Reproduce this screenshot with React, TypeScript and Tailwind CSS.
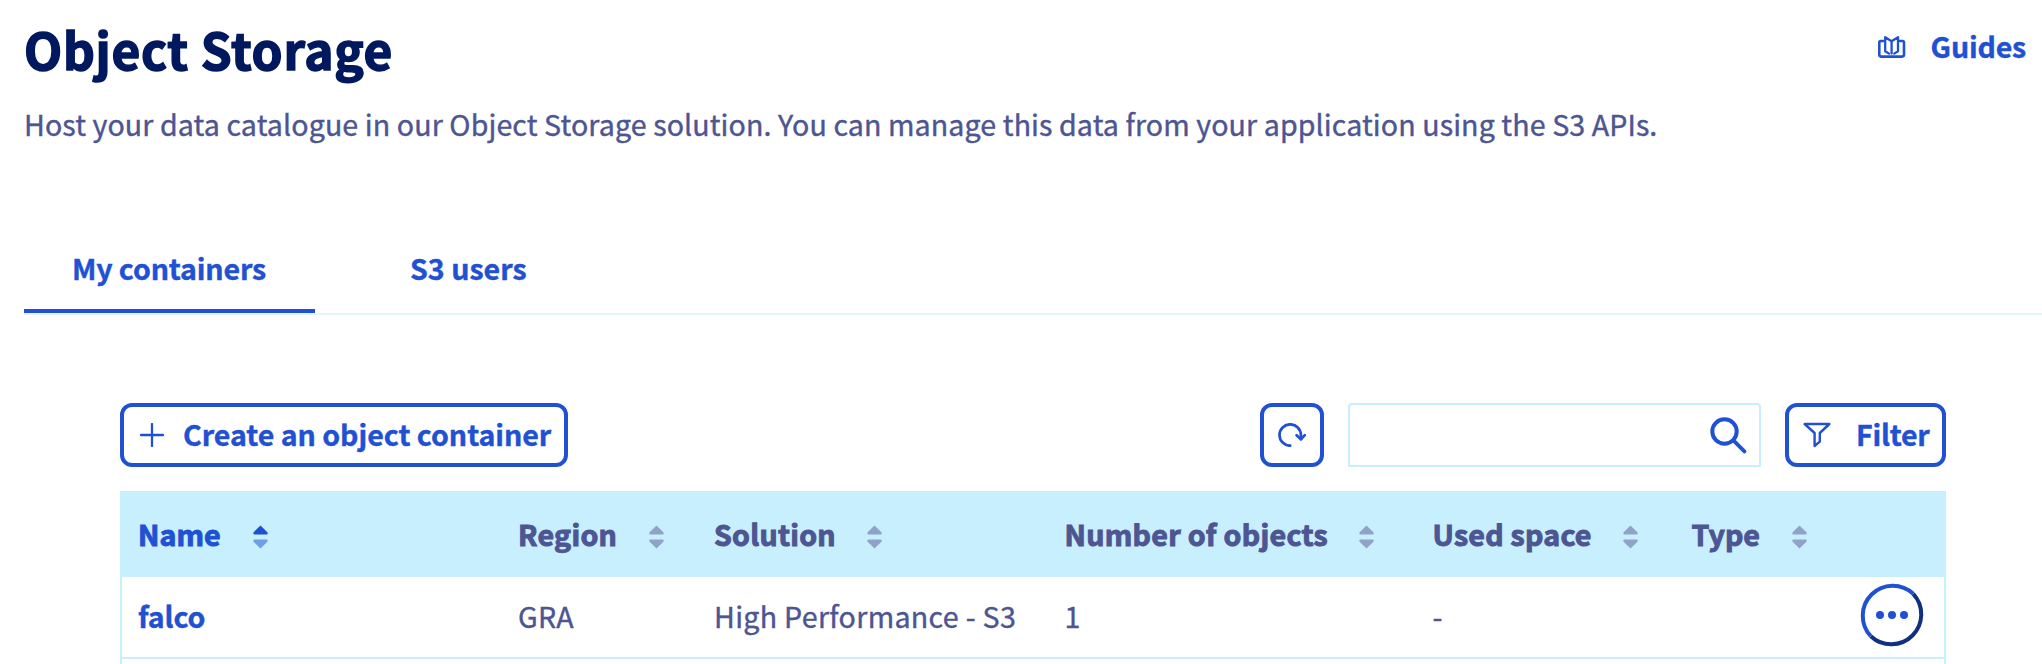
import type { ReactNode } from "react";

function GuidesIcon() {
  return (
    <svg width="28" height="24" viewBox="0 0 28 24" fill="none" stroke="currentColor" strokeWidth="2.6" strokeLinecap="round" strokeLinejoin="round">
      <path d="M5.5 6H2.8Q1.3 6 1.3 7.8V19.6Q1.3 21.6 3 21.6H24.2Q26 21.6 26 19.6V7.8Q26 6 24.4 6H21.7" />
      <path strokeWidth="2.3" d="M13.6 6.2L7.2 2.2V16.2L11 18.6M13.6 6.2L20 2.2V16.2L16.2 18.6M13.6 6.2V18.6" />
    </svg>
  );
}

function PlusIcon() {
  return (
    <svg width="24" height="24" viewBox="0 0 24 24" stroke="currentColor" strokeWidth="2.3" strokeLinecap="round">
      <path d="M12 1V23M1 12H23" />
    </svg>
  );
}

function RefreshIcon() {
  return (
    <svg width="28" height="24" viewBox="0 0 28 24" fill="none" stroke="currentColor" strokeWidth="2.7" strokeLinecap="round" strokeLinejoin="round">
      <path d="M12.2 22.7A10.7 10.7 0 1 1 22.9 12V16.2" />
      <path d="M18.6 12.2L22.9 16.4L26.8 12.2" />
    </svg>
  );
}

function SearchIcon() {
  return (
    <svg width="38" height="38" viewBox="0 0 38 38" fill="none" stroke="currentColor" strokeLinecap="round">
      <circle cx="15.5" cy="15.5" r="12.2" strokeWidth="4" />
      <path d="M24.4 24.4L35.4 35.4" strokeWidth="3.8" />
    </svg>
  );
}

function FilterIcon() {
  return (
    <svg width="28" height="26" viewBox="0 0 28 26" fill="none" stroke="currentColor" strokeWidth="2.4" strokeLinejoin="round">
      <path d="M1.6 2H26.4L16.8 11V19.6L11.6 24V11Z" />
    </svg>
  );
}

function SortIcon({ active = false }: { active?: boolean }) {
  return (
    <svg width="15" height="24" viewBox="0 0 15 24" className={active ? "text-[#1f51d2]" : "text-[#8fa3c6]"} fill="currentColor">
      <path d="M7.5 .6L14.4 7.2Q15.4 9.4 13.4 9.6H1.6Q-.4 9.4 .6 7.2Z" />
      <path className={active ? "text-[#6f9ee5]" : ""} d="M7.5 23.4L14.4 16.8Q15.4 14.6 13.4 14.4H1.6Q-.4 14.6 .6 16.8Z" />
    </svg>
  );
}

function Heading({ className, label, active }: { className: string; label: ReactNode; active?: boolean }) {
  return (
    <div className="flex items-center">
      <span className={`whitespace-nowrap font-bold [-webkit-text-stroke:1px_currentColor] ${className}`}>{label}</span>
      <span className="mt-[7px]"><SortIcon active={active} /></span>
    </div>
  );
}

const columns = "grid grid-cols-[380px_196px_350px_368px_259px_1fr] pl-4";

export default function App() {
  return (
    <div className="h-[664px] w-full overflow-hidden bg-white pl-6 font-['Noto_Sans_CJK_SC','Noto_Sans',sans-serif] text-[28.6px] leading-10 text-[#4d5592] [-webkit-text-stroke:0.4px_currentColor]">
      <header className="flex h-[104px] justify-between">
        <h1 className="pt-[12px] text-[49.6px] leading-[72px] font-bold tracking-[0.72px] text-[#00185e] [-webkit-text-stroke:1.5px_currentColor]">Object Storage</h1>
        <a className="flex h-10 pt-[26px] pr-[16px] font-bold text-[#1f51d2]">
          <span className="mt-[9px] mr-[25px]"><GuidesIcon /></span>
          <span className="tracking-[-0.2px]">Guides</span>
        </a>
      </header>
      <p className="whitespace-nowrap tracking-[0.097px]">
        Host your data catalogue in our Object Storage solution. You can manage this data from your application using the S3 APIs.
      </p>

      <nav className="mt-[91px] flex h-[80px] border-b-2 border-[#e6f4fb] font-bold text-[#1f51d2]">
        <a className="w-[291px] border-b-4 border-[#1f51d2] pt-[13px] pl-[48px] tracking-[-0.15px]">My containers</a>
        <a className="pt-[13px] pl-[95px]">S3 users</a>
      </nav>

      <main className="mt-[88px] ml-[96px] w-[1826px]">
        <div className="flex h-16 text-[#1f51d2]">
          <button className="flex w-[448px] items-center rounded-xl border-4 border-[#1f51d2] pl-4 font-bold">
            <PlusIcon />
            <span className="-mt-[2px] ml-[19px] whitespace-nowrap tracking-[-0.05px]">Create an object container</span>
          </button>
          <button className="ml-auto flex w-16 items-center rounded-xl border-4 border-[#1f51d2] pl-[14px]">
            <RefreshIcon />
          </button>
          <div className="ml-6 flex w-[413px] justify-end rounded-t border-2 border-[#c8effe] pt-[11px] pr-[12px]">
            <SearchIcon />
          </div>
          <button className="ml-6 flex w-[161px] items-center rounded-xl border-4 border-[#1f51d2] pl-[14px] font-bold">
            <FilterIcon />
            <span className="-mt-[2px] ml-[25px] tracking-[-0.24px]">Filter</span>
          </button>
        </div>

        <section className="mt-6 h-[200px] border-x-2 border-[#c8effe]">
          <div className={`${columns} h-[86px] items-center bg-[#c8effe] pb-[1px]`}>
            <Heading className="w-[115px] tracking-[0.05px] text-[#1f51d2]" label="Name" active />
            <Heading className="w-[131px] tracking-[0.3px]" label="Region" />
            <Heading className="w-[153px] tracking-[0.25px]" label="Solution" />
            <Heading className="w-[295px] pl-[0.5px] tracking-[0.3px]" label="Number of objects" />
            <Heading className="w-[191px] pl-[0.5px] tracking-[0.25px]" label="Used space" />
            <Heading className="w-[101px] pl-[0.5px]" label="Type" />
          </div>
          <div className={`${columns} h-[82px] border-b-2 border-[#c8effe]`}>
            <span className="pt-[19px] font-bold tracking-[-0.15px] text-[#1f51d2]">falco</span>
            <span className="pt-[19px] tracking-[0.2px]">GRA</span>
            <span className="pt-[19px] whitespace-nowrap tracking-[0.31px]">High Performance - S3</span>
            <span className="pt-[19px] pl-[0.5px]">1</span>
            <span className="pt-[19px] pl-[0.5px]">-</span>
            <span className="flex justify-end pt-[6px] pr-[20px]">
              <svg width="64" height="64" viewBox="0 0 64 64" fill="none" strokeWidth="4">
                <path d="M10.8 53.2A30 30 0 0 1 53.2 10.8" stroke="#1f51d2" />
                <path d="M53.2 10.8A30 30 0 0 1 10.8 53.2" stroke="#113080" />
                <g fill="#1f51d2"><circle cx="20" cy="32" r="4" /><circle cx="32" cy="32" r="4" /><circle cx="44" cy="32" r="4" /></g>
              </svg>
            </span>
          </div>
        </section>
      </main>
    </div>
  );
}
